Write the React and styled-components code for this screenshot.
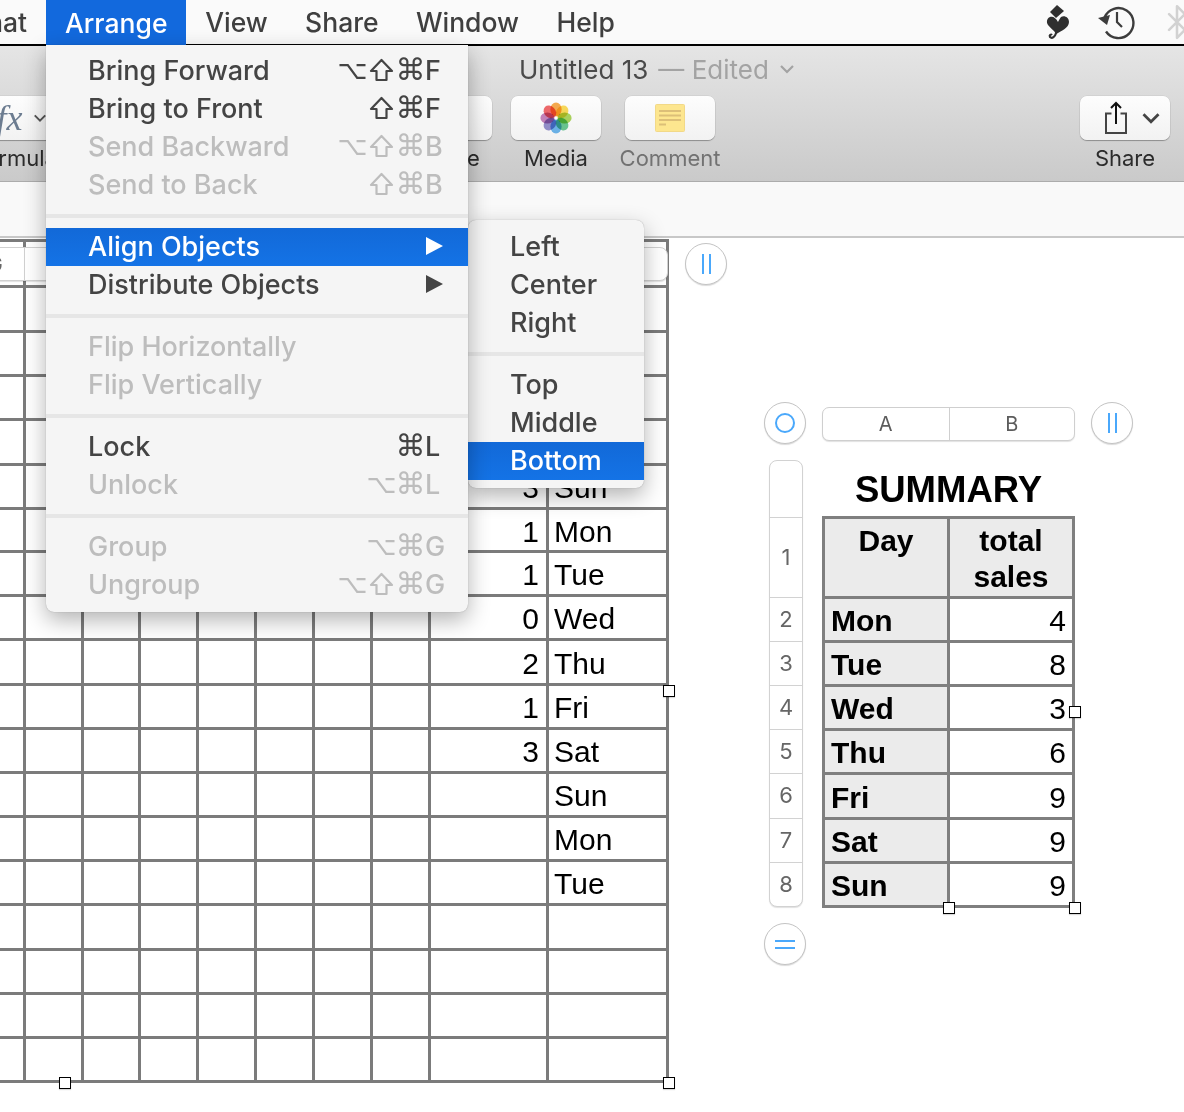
import styled, { createGlobalStyle } from "styled-components"
import { Bluetooth } from "lucide-react"

const ui_font = `Inter, "Liberation Sans", sans-serif`
const sheet_font = `"Liberation Sans", Arial, sans-serif`
const key_font = `"DejaVu Sans", Inter, sans-serif`

const GlobalStyle = createGlobalStyle`
    html, body { margin: 0; padding: 0; background: #fff; }
    body { width: 1184px; height: 1112px; overflow: hidden; font-family: ${ ui_font }; }
`

const Page = styled.div`
    position: relative;
    width: 1184px;
    height: 1112px;
    overflow: hidden;
    background: #fff;
`

// ─── Menu bar ──────────────────────────────────────────────────

const MenuBar = styled.div`
    display: flex;
    align-items: stretch;
    height: 44px;
    background: #fafafa;
    border-bottom: 2px solid #000;
    font-size: 26.5px;
    font-weight: 500;
    color: #3f3f3f;
`

const ClippedMenu = styled.div`
    display: flex;
    justify-content: flex-end;
    align-items: center;
    width: 27px;
    margin-right: 19px;
    overflow: hidden;
    white-space: nowrap;
`

const MenuTitle = styled.div`
    display: flex;
    align-items: center;
    padding: 0 ${ ( { $active } ) => $active ? '19px' : '18.7px' };
    background: ${ ( { $active } ) => $active ? '#1269dd' : 'transparent' };
    color: ${ ( { $active } ) => $active ? '#fff' : '#3f3f3f' };
    height: ${ ( { $active } ) => $active ? '46px' : 'auto' };
`

const StatusIcons = styled.div`
    display: flex;
    align-items: center;
    gap: 27px;
    margin-left: auto;
    margin-right: -12px;
`

const BluetoothIcon = styled( Bluetooth )`
    margin-left: -4px;
`

// ─── Toolbar ───────────────────────────────────────────────────

const Toolbar = styled.div`
    height: 135px;
    background: linear-gradient( #e5e5e5, #cacaca );
    border-bottom: 1px solid #acacac;
    display: flex;
    flex-direction: column;
`

const TitleRow = styled.div`
    display: flex;
    align-items: center;
    box-sizing: border-box;
    height: 50px;
    padding: 0 0 4px 519px;
    font-size: 26px;
    color: #4a4a4a;
    white-space: nowrap;
`

const Edited = styled.span`
    color: #a3a3a3;
    margin: 0 10px;
`

const ToolRow = styled.div`
    display: flex;
    align-items: flex-start;
`

const ToolGroup = styled.div`
    display: flex;
    flex-direction: column;
    align-items: center;
    flex-shrink: 0;
    width: 90px;
    margin-left: ${ ( { $gap } ) => $gap };
    margin-right: ${ ( { $end } ) => $end || 0 };
`

const ToolButton = styled.div`
    display: flex;
    align-items: center;
    justify-content: center;
    gap: ${ ( { $gap } ) => $gap || 0 };
    box-sizing: border-box;
    width: 90px;
    height: 44px;
    padding-left: ${ ( { $shift } ) => $shift || 0 };
    background: linear-gradient( #fdfdfd, #f2f2f2 );
    border-radius: 7px;
    box-shadow: 0 1px 1px rgba( 0, 0, 0, 0.3 ), 0 0 0 0.5px rgba( 0, 0, 0, 0.08 );
`

const FxLabel = styled.span`
    font-family: "Liberation Serif", serif;
    font-style: italic;
    font-size: 36px;
    color: #6c7c90;
`

const ToolLabel = styled.div`
    margin-top: 5px;
    font-size: 22px;
    line-height: 26px;
    white-space: nowrap;
    color: ${ ( { $muted } ) => $muted ? '#727272' : '#2b2b2b' };
`

const FormatBar = styled.div`
    height: 54px;
    background: #f9f9f9;
    border-bottom: 2px solid #c8c8c8;
`

// ─── Canvas ────────────────────────────────────────────────────

const Canvas = styled.div`
    display: flex;
    align-items: flex-start;
`

const Sheet = styled.div`
    position: relative;
    flex-shrink: 0;
    margin-left: -60px;
    margin-top: 1px;
`

const MainGrid = styled.div`
    display: grid;
    grid-template-columns: 80px 55px 54px 55px 55px 55px 55px 55px 115px 117px;
    grid-template-rows: 43px 42px 41px 41px 42px 41px 40px 41px 41px 42px 41px 41px 41px 41px 41px 42px 41px 41px 41px;
    gap: 3px;
    padding: 3px;
    background: #7b7b7b;
`

const Cell = styled.div`
    display: flex;
    align-items: center;
    justify-content: ${ ( { $num } ) => $num ? 'flex-end' : 'flex-start' };
    padding: 3px ${ ( { $num } ) => $num ? '7px' : '0' } 0 ${ ( { $num } ) => $num ? '0' : '5px' };
    background: #fff;
    font-family: ${ sheet_font };
    font-size: 30px;
    color: #000;
    overflow: hidden;
`

const ColumnStrip = styled.div`
    position: absolute;
    top: 8px;
    left: 0;
    right: 1px;
    height: 34px;
    display: grid;
    grid-template-columns: 84px 1fr;
    background: #fff;
    border: 1px solid #d0d0d0;
    border-radius: 0 8px 8px 0;
    box-shadow: 0 1px 1px rgba( 0, 0, 0, 0.12 );
    box-sizing: border-box;
    font-size: 22px;
    color: #666;
`

const StripCell = styled.div`
    display: flex;
    align-items: center;
    justify-content: flex-end;
    padding-right: 21px;
    border-right: 1px solid #d0d0d0;
    overflow: hidden;
`

const RoundButton = styled.div`
    display: flex;
    align-items: center;
    justify-content: center;
    gap: ${ ( { $gap } ) => $gap || 0 };
    flex-direction: ${ ( { $stack } ) => $stack ? 'column' : 'row' };
    box-sizing: border-box;
    width: 42px;
    height: 42px;
    border-radius: 50%;
    background: #fff;
    border: 1px solid #c4c4c4;
    box-shadow: 0 1px 1px rgba( 0, 0, 0, 0.15 );
`

const BlueBar = styled.span`
    display: block;
    background: #4aa8fb;
    width: ${ ( { $flat } ) => $flat ? '20px' : '2px' };
    height: ${ ( { $flat } ) => $flat ? '2px' : '20px' };
`

const BlueRing = styled.span`
    display: block;
    box-sizing: border-box;
    width: 20px;
    height: 20px;
    border-radius: 50%;
    border: 2px solid #4aa8fb;
`

const FloatingRound = styled( RoundButton )`
    position: absolute;
    left: 745px;
    top: 4px;
`

const Handle = styled.span`
    position: absolute;
    left: ${ ( { $x } ) => $x }px;
    top: ${ ( { $y } ) => $y }px;
    box-sizing: border-box;
    width: 12px;
    height: 12px;
    margin: -6px 0 0 -6px;
    background: #fff;
    border: 1px solid #000;
    box-shadow: 0 1px 1px rgba( 0, 0, 0, 0.15 );
`

// ─── Summary table ─────────────────────────────────────────────

const Summary = styled.div`
    position: relative;
    display: grid;
    grid-template-columns: 42px 253px 42px;
    grid-template-rows: 42px 447px 42px;
    column-gap: 16px;
    row-gap: 16px;
    flex-shrink: 0;
    margin-left: 95px;
    margin-top: 164px;
`

const HeaderBar = styled.div`
    display: grid;
    grid-template-columns: 1fr 1fr;
    align-self: center;
    height: 34px;
    margin-top: 2px;
    background: #fff;
    border: 1px solid #cfcfcf;
    border-radius: 7px;
    box-sizing: border-box;
    box-shadow: 0 1px 1px rgba( 0, 0, 0, 0.12 );
    font-size: 20px;
    color: #5c5c5c;
`

const HeaderCell = styled.div`
    display: flex;
    align-items: center;
    justify-content: center;
    & + & { border-left: 1px solid #cfcfcf; }
`

const RowHeader = styled.div`
    display: grid;
    grid-template-rows: 56px 80px 44px 44px 44px 44px 45px 44px 1fr;
    justify-self: end;
    width: 34px;
    margin-right: 3px;
    box-sizing: border-box;
    background: #fff;
    border: 1px solid #d2d2d2;
    border-radius: 8px;
    box-shadow: 0 1px 1px rgba( 0, 0, 0, 0.12 );
    font-size: 22px;
    color: #666;
`

const RowHeaderCell = styled.div`
    display: flex;
    align-items: center;
    justify-content: center;
    padding-bottom: 2px;
    & + & { border-top: 1px solid #d2d2d2; }
`

const SummaryBody = styled.div`
    display: flex;
    flex-direction: column;
`

const SummaryTitle = styled.div`
    height: 56px;
    line-height: 60px;
    text-align: center;
    white-space: nowrap;
    font-family: ${ sheet_font };
    font-weight: 700;
    font-size: 36.5px;
    color: #000;
`

const SummaryGrid = styled.div`
    display: grid;
    grid-template-columns: 122px 122px;
    grid-template-rows: 77px 41px 41px 41px 41px 42px 41px 41px;
    gap: 3px;
    padding: 3px;
    background: #7f7f7f;
    font-family: ${ sheet_font };
    font-size: 30px;
    color: #000;
`

const HeadCell = styled.div`
    background: #ebebeb;
    font-weight: 700;
    text-align: center;
    line-height: 36px;
    padding-top: 4px;
`

const DayCell = styled.div`
    display: flex;
    align-items: center;
    padding: 3px 0 0 6px;
    background: #ebebeb;
    font-weight: 700;
`

const ValueCell = styled.div`
    display: flex;
    align-items: center;
    justify-content: flex-end;
    padding: 3px 6px 0 0;
    background: #fff;
`

const SummaryHandle = styled( Handle )`
    z-index: 1;
`

// ─── Menus ─────────────────────────────────────────────────────

const Menu = styled.div`
    position: absolute;
    z-index: ${ ( { $z } ) => $z };
    left: ${ ( { $x } ) => $x }px;
    top: ${ ( { $y } ) => $y }px;
    width: ${ ( { $w } ) => $w }px;
    padding: ${ ( { $top } ) => $top }px 0 8px;
    background: #f5f5f5;
    border-radius: ${ ( { $sub } ) => $sub ? '8px' : '0 0 8px 8px' };
    box-shadow: 0 8px 22px rgba( 0, 0, 0, 0.3 ), 0 0 1px rgba( 0, 0, 0, 0.35 );
    font-size: 27px;
    font-weight: 500;
`

const MenuItem = styled.div`
    display: flex;
    align-items: center;
    justify-content: space-between;
    box-sizing: border-box;
    height: 38px;
    padding: 0 23px 2px ${ ( { $pad } ) => $pad }px;
    white-space: nowrap;
    color: ${ ( { $off, $on } ) => $on ? '#fff' : $off ? '#bdbdbd' : '#444' };
    background: ${ ( { $on } ) => $on ? 'linear-gradient( #1269d8, #1473e6 )' : 'transparent' };
`

const MenuRule = styled.div`
    height: 4px;
    margin: 10px 0;
    background: #e6e6e6;
`

const Keys = styled.span`
    display: flex;
    align-items: center;
    justify-content: flex-end;
`

const Mod = styled.span`
    display: flex;
    justify-content: center;
    width: 29px;
    font-family: ${ key_font };
    font-size: ${ ( { $wide } ) => $wide ? '30px' : '26px' };
    line-height: 30px;
`

const KeyChar = styled.span`
    width: 20px;
`

const SubArrow = styled.span`
    width: 0;
    height: 0;
    margin-right: 2px;
    border-left: 17px solid ${ ( { $on } ) => $on ? '#fff' : '#444' };
    border-top: 9.5px solid transparent;
    border-bottom: 9.5px solid transparent;
`

// ─── Drawings ──────────────────────────────────────────────────

const petals = [ '#f7a33c', '#fbd84a', '#a5d24c', '#5cc488', '#5fb0ee', '#8b86ca', '#c278b6', '#ef5a5c' ]

function PhotosIcon() {
    return <svg width="32" height="32" viewBox="-16 -16 32 32">
        { petals.map( ( color, i ) => <ellipse
            key={ color } cx="0" cy="-8.6" rx="5.6" ry="7" fill={ color } fillOpacity="0.9"
            transform={ `rotate( ${ i * 45 } )` } style={ { mixBlendMode: 'multiply' } }
        /> ) }
        <circle r="1.2" fill="#fff" />
    </svg>
}

function NoteIcon() {
    return <svg width="30" height="28" viewBox="0 0 30 28">
        <rect x="0.5" y="0.5" width="29" height="27" rx="1" fill="#fde68f" stroke="#f2d988" />
        <path d="M4 7h22M4 11.5h22M4 16h22M4 20.5h7" stroke="#dcbf78" strokeWidth="1.8" />
    </svg>
}

function ShareIcon() {
    return <svg width="24" height="34" viewBox="0 0 24 34" fill="none">
        <path d="M7.5 12.5H2v19.5h20V12.5h-5.5" stroke="#444" strokeWidth="2" />
        <path d="M12 2v21" stroke="#111" strokeWidth="2" />
        <path d="M7 7l5-5 5 5" stroke="#111" strokeWidth="2" />
    </svg>
}

function Chevron( { size, color } ) {
    return <svg width={ size } height={ size } viewBox="0 0 16 16" fill="none">
        <path d="M2 5l6 6 6-6" stroke={ color } strokeWidth="2.2" />
    </svg>
}

function ShiftGlyph() {
    return <svg width="25" height="24" viewBox="0 0 25 24" fill="none">
        <path d="M12.5 2L23 13h-5.5v9h-10v-9H2z" stroke="currentColor" strokeWidth="2.2" strokeLinejoin="round" />
    </svg>
}

function RibbonIcon() {
    return <svg width="24" height="36" viewBox="0 0 24 36" fill="none">
        <path fill="#2f2f2f" d="M4 8L11 1L18 7L10 14Z" />
        <path fill="#2f2f2f" d="M12 18C10 14 7 12 4 13C1 14 0 18 2 21C4 24 8 26 10 30L12 29C15 27 23 24 23 18C23 13 18 11 15 13C14 14 13 16 12 18Z" />
        <path stroke="#2f2f2f" strokeWidth="2.2" d="M10.5 28C9 33 6 35 4 33C3 31 5 30 6 31" />
    </svg>
}

function TimeMachineIcon() {
    return <svg width="38" height="38" viewBox="0 0 38 38" fill="none">
        <path d="M7.5 14.5A15 15 0 1 1 9 28.5" stroke="#3c3c3c" strokeWidth="2.4" />
        <path d="M1 15l12-3-3 10z" fill="#3c3c3c" />
        <path d="M20 9v10l5 5" stroke="#3c3c3c" strokeWidth="2.2" />
    </svg>
}

// ─── Data ──────────────────────────────────────────────────────

const row_count = 19
const column_count = 10

const main_rows = {
    5: [ '3', 'Sun' ],
    6: [ '1', 'Mon' ],
    7: [ '1', 'Tue' ],
    8: [ '0', 'Wed' ],
    9: [ '2', 'Thu' ],
    10: [ '1', 'Fri' ],
    11: [ '3', 'Sat' ],
    12: [ '', 'Sun' ],
    13: [ '', 'Mon' ],
    14: [ '', 'Tue' ],
}

const summary_rows = [
    [ 'Mon', 4 ], [ 'Tue', 8 ], [ 'Wed', 3 ], [ 'Thu', 6 ],
    [ 'Fri', 9 ], [ 'Sat', 9 ], [ 'Sun', 9 ],
]

const arrange_menu = [
    [
        { label: 'Bring Forward', mods: '⌥⇧⌘', key_char: 'F' },
        { label: 'Bring to Front', mods: '⇧⌘', key_char: 'F' },
        { label: 'Send Backward', mods: '⌥⇧⌘', key_char: 'B', off: true },
        { label: 'Send to Back', mods: '⇧⌘', key_char: 'B', off: true },
    ],
    [
        { label: 'Align Objects', arrow: true, on: true },
        { label: 'Distribute Objects', arrow: true },
    ],
    [
        { label: 'Flip Horizontally', off: true },
        { label: 'Flip Vertically', off: true },
    ],
    [
        { label: 'Lock', mods: '⌘', key_char: 'L' },
        { label: 'Unlock', mods: '⌥⌘', key_char: 'L', off: true },
    ],
    [
        { label: 'Group', mods: '⌥⌘', key_char: 'G', off: true },
        { label: 'Ungroup', mods: '⌥⇧⌘', key_char: 'G', off: true },
    ],
]

function ArrangeMenu() {
    return <Menu $x={ 46 } $y={ 45 } $w={ 422 } $top={ 7 } $z={ 3 }>
        { arrange_menu.map( ( group, g ) => <div key={ g }>
            { g > 0 && <MenuRule /> }
            { group.map( item => <MenuItem key={ item.label } $pad={ 42 } $off={ item.off } $on={ item.on }>
                { item.label }
                { item.arrow && <SubArrow $on={ item.on } /> }
                { item.mods && <Keys>
                    { [ ...item.mods ].map( mod => <Mod key={ mod } $wide={ mod === '⌘' }>
                        { mod === '⇧' ? <ShiftGlyph /> : mod }
                    </Mod> ) }
                    <KeyChar>{ item.key_char }</KeyChar>
                </Keys> }
            </MenuItem> ) }
        </div> ) }
    </Menu>
}

function AlignMenu() {
    return <Menu $x={ 468 } $y={ 220 } $w={ 176 } $top={ 8 } $z={ 2 } $sub>
        <MenuItem $pad={ 42 }>Left</MenuItem>
        <MenuItem $pad={ 42 }>Center</MenuItem>
        <MenuItem $pad={ 42 }>Right</MenuItem>
        <MenuRule />
        <MenuItem $pad={ 42 }>Top</MenuItem>
        <MenuItem $pad={ 42 }>Middle</MenuItem>
        <MenuItem $pad={ 42 } $on>Bottom</MenuItem>
    </Menu>
}

function MainSheet() {
    const cells = []
    for( let r = 0; r < row_count; r++ ) {
        for( let c = 0; c < column_count; c++ ) {
            const values = main_rows[ r ]
            if( c === 8 ) cells.push( <Cell key={ `${ r }-${ c }` } $num>{ values?.[ 0 ] }</Cell> )
            else if( c === 9 ) cells.push( <Cell key={ `${ r }-${ c }` }>{ values?.[ 1 ] }</Cell> )
            else cells.push( <Cell key={ `${ r }-${ c }` } /> )
        }
    }
    return <Sheet>
        <MainGrid>{ cells }</MainGrid>
        <ColumnStrip>
            <StripCell>G</StripCell>
            <div />
        </ColumnStrip>
        <FloatingRound $gap="5px"><BlueBar /><BlueBar /></FloatingRound>
        <Handle $x={ 729 } $y={ 452 } />
        <Handle $x={ 125 } $y={ 844 } />
        <Handle $x={ 729 } $y={ 844 } />
    </Sheet>
}

function SummaryTable() {
    return <Summary>
        <RoundButton><BlueRing /></RoundButton>
        <HeaderBar>
            <HeaderCell>A</HeaderCell>
            <HeaderCell>B</HeaderCell>
        </HeaderBar>
        <RoundButton $gap="5px"><BlueBar /><BlueBar /></RoundButton>

        <RowHeader>
            <RowHeaderCell />
            { [ 1, 2, 3, 4, 5, 6, 7, 8 ].map( n => <RowHeaderCell key={ n }>{ n }</RowHeaderCell> ) }
        </RowHeader>
        <SummaryBody>
            <SummaryTitle>SUMMARY</SummaryTitle>
            <SummaryGrid>
                <HeadCell>Day</HeadCell>
                <HeadCell>total<br />sales</HeadCell>
                { summary_rows.map( ( [ day, total ] ) => [
                    <DayCell key={ day }>{ day }</DayCell>,
                    <ValueCell key={ `${ day }-total` }>{ total }</ValueCell>,
                ] ) }
            </SummaryGrid>
        </SummaryBody>
        <div />

        <RoundButton $stack $gap="5px"><BlueBar $flat /><BlueBar $flat /></RoundButton>

        <SummaryHandle $x={ 311 } $y={ 310 } />
        <SummaryHandle $x={ 185 } $y={ 506 } />
        <SummaryHandle $x={ 311 } $y={ 506 } />
    </Summary>
}

export default function App() {
    return <Page>
        <GlobalStyle />

        <MenuBar>
            <ClippedMenu>Format</ClippedMenu>
            <MenuTitle $active>Arrange</MenuTitle>
            <MenuTitle>View</MenuTitle>
            <MenuTitle>Share</MenuTitle>
            <MenuTitle>Window</MenuTitle>
            <MenuTitle>Help</MenuTitle>
            <StatusIcons>
                <RibbonIcon />
                <TimeMachineIcon />
                <BluetoothIcon size={ 38 } color="#d2d2d2" strokeWidth={ 1.6 } />
            </StatusIcons>
        </MenuBar>

        <Toolbar>
            <TitleRow>
                Untitled 13
                <Edited>— Edited</Edited>
                <Chevron size={ 16 } color="#a3a3a3" />
            </TitleRow>
            <ToolRow>
                <ToolGroup $gap="-30px">
                    <ToolButton $gap="11px" $shift="14px">
                        <FxLabel>fx</FxLabel>
                        <Chevron size={ 14 } color="#555" />
                    </ToolButton>
                    <ToolLabel>Formula</ToolLabel>
                </ToolGroup>
                <ToolGroup $gap="342px">
                    <ToolButton />
                    <ToolLabel>Shape</ToolLabel>
                </ToolGroup>
                <ToolGroup $gap="19px">
                    <ToolButton><PhotosIcon /></ToolButton>
                    <ToolLabel>Media</ToolLabel>
                </ToolGroup>
                <ToolGroup $gap="24px">
                    <ToolButton><NoteIcon /></ToolButton>
                    <ToolLabel $muted>Comment</ToolLabel>
                </ToolGroup>
                <ToolGroup $gap="auto" $end="14px">
                    <ToolButton $gap="13px" $shift="15px">
                        <ShareIcon />
                        <Chevron size={ 20 } color="#444" />
                    </ToolButton>
                    <ToolLabel>Share</ToolLabel>
                </ToolGroup>
            </ToolRow>
        </Toolbar>

        <FormatBar />

        <Canvas>
            <MainSheet />
            <SummaryTable />
        </Canvas>

        <ArrangeMenu />
        <AlignMenu />
    </Page>
}
